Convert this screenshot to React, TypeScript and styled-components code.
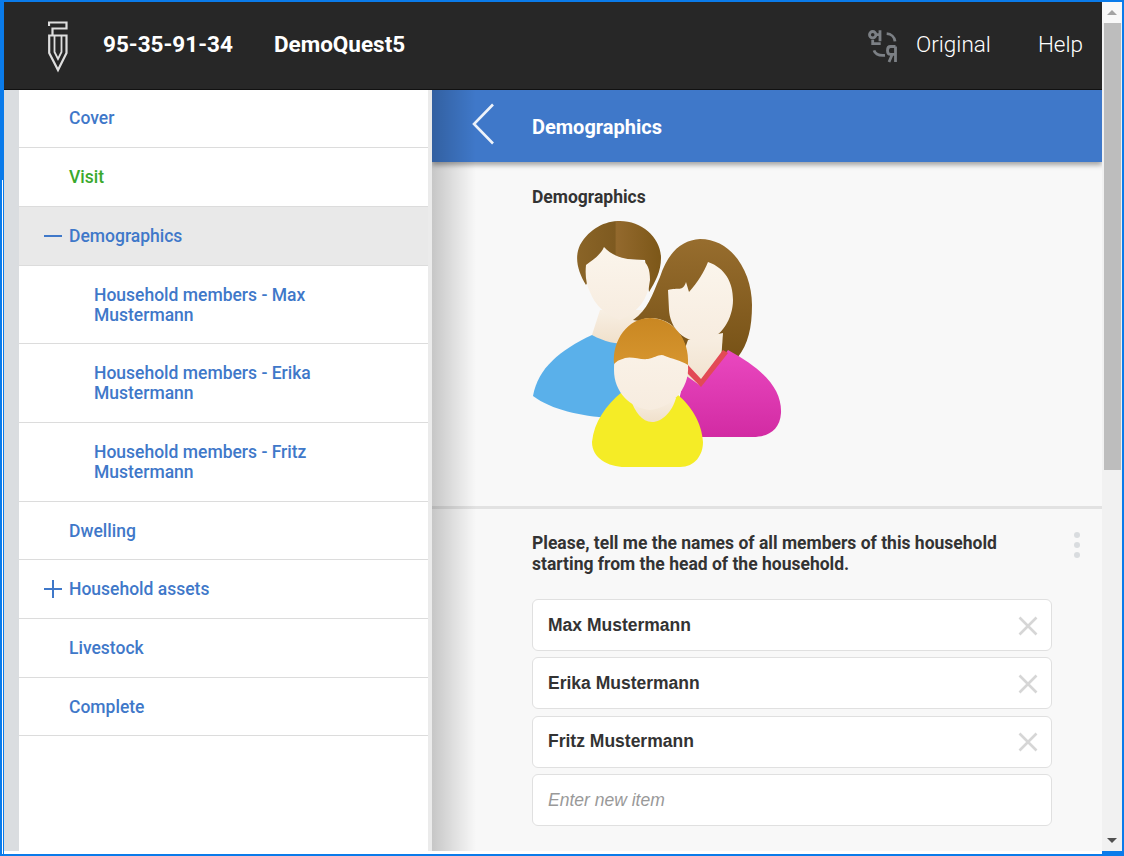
import React from "react";
import styled, { createGlobalStyle } from "styled-components";

const BLUE = "#3f78c9";

const GlobalStyle = createGlobalStyle`
  html, body {
    margin: 0;
    padding: 0;
    height: 100%;
    overflow: hidden;
    background: #fff;
    font-family: Roboto, "Liberation Sans", sans-serif;
  }
`;

const LogoIcon = () => (
  <svg width="20" height="52" viewBox="0 0 20 52" fill="none" stroke="#dedede" strokeWidth="2.2">
    <path d="M1 5V1.5H18.5V7.5H4.5V14" />
    <path d="M1.2 14.5H18.5V32L10 49L1.2 32Z" />
    <path d="M6.5 15V31L10 38L13.5 31V15" strokeWidth="1.8" />
  </svg>
);

const TranslateIcon = () => (
  <svg width="32" height="34" viewBox="0 0 32 34" fill="none" stroke="#7c8085" strokeWidth="2.8">
    <circle cx="4.7" cy="5.7" r="3.2" />
    <path d="M12 1.3V12.3M8 5.7H12" />
    <path d="M4.7 10.7V14.7H12.7" />
    <path d="M18.7 4.7C23 5 26.5 8 27 12.3" />
    <path d="M6 21.3C7 24.5 11 26.8 17 26.3" />
    <path d="M27.5 17.5V33M27.5 17.5H22.5C18.5 17.5 18.5 25.3 22.5 25.3H27.5M24.3 25.3L21 33" />
  </svg>
);

const Family = () => (
  <svg width="280" height="270" viewBox="0 0 280 270">
    <defs>
      <linearGradient id="hairA" x1="0" x2="1" y1="0" y2="0">
        <stop offset="0" stopColor="#8a6427" />
        <stop offset="0.45" stopColor="#7e5a20" />
        <stop offset="0.47" stopColor="#93692d" />
        <stop offset="1" stopColor="#7c5718" />
      </linearGradient>
      <linearGradient id="hairB" x1="0" x2="0" y1="0" y2="1">
        <stop offset="0" stopColor="#976d2e" />
        <stop offset="1" stopColor="#775216" />
      </linearGradient>
      <linearGradient id="face" x1="0" x2="0" y1="0" y2="1">
        <stop offset="0" stopColor="#fbf5ec" />
        <stop offset="1" stopColor="#f7ecdf" />
      </linearGradient>
      <linearGradient id="neck" x1="0" x2="0" y1="0" y2="1">
        <stop offset="0" stopColor="#f8efe3" />
        <stop offset="1" stopColor="#f0e0cb" />
      </linearGradient>
      <linearGradient id="pink" x1="0" x2="0" y1="0" y2="1">
        <stop offset="0" stopColor="#ea48c0" />
        <stop offset="1" stopColor="#d22ba3" />
      </linearGradient>
      <linearGradient id="orange" x1="0" x2="0" y1="0" y2="1">
        <stop offset="0" stopColor="#c98722" />
        <stop offset="1" stopColor="#d6952e" />
      </linearGradient>
    </defs>
    {/* father */}
    <path d="M72 125C40 140 18 158 13 186C32 200 60 206 90 208L130 130Z" fill="#5ab0ea" />
    <path d="M80 100L72 125C85 132 95 134 110 134L130 100Z" fill="url(#neck)" />
    <path d="M66 75C58 62 54 48 60 35C70 18 85 11 100 11C122 11 141 28 141 48C141 62 135 72 129 82L125 50L80 48Z" fill="url(#hairA)" />
    <path d="M66 55C72 50 80 46 84 37C92 46 105 50 120 50C128 52 130 60 130 70C128 90 118 102 100 110C85 105 75 95 70 82C66 74 65 65 66 55Z" fill="url(#face)" />
    {/* mother */}
    <path d="M113 110C128 100 132 85 140 67C148 42 162 30 180 29C212 29 232 62 232 95C232 118 228 134 218 147L170 150L125 112Z" fill="url(#hairB)" />
    <path d="M168 130L150 180L200 165L203 123Z" fill="url(#neck)" />
    <path d="M208 140C245 160 262 180 261 203C260 220 248 227 233 227H150L165 165L181 176Z" fill="url(#pink)" />
    <path d="M168 155L181 169L203 140L208 143L181 177L164 160Z" fill="#e24a55" />
    <path d="M148 80C158 77 163 82 166 72L169 82C178 72 184 62 188 52C205 58 213 72 213 90C213 108 202 128 183 132C160 132 150 115 149 100Z" fill="url(#face)" />
    {/* child */}
    <path d="M102 182C86 195 74 212 72 232C72 248 88 257 105 257H160C175 257 183 245 183 232C182 212 170 195 158 185L130 200Z" fill="#f5ec26" />
    <path d="M110 188C115 202 122 212 132 212C142 212 152 202 156 188Z" fill="url(#neck)" />
    <path d="M94 160C94 135 110 108 130 108C155 108 168 130 168 155C170 180 150 198 130 200C110 198 94 182 94 160Z" fill="url(#face)" />
    <path d="M94 154C92 130 108 108 130 108C152 108 170 128 168 155C160 150 152 149 145 146C140 143 135 148 128 149C120 150 112 146 105 148C100 150 98 150 94 154Z" fill="url(#orange)" />
  </svg>
);

const Frame = styled.div`
  box-sizing: border-box;
  width: 1124px;
  height: 856px;
  position: relative;
  display: flex;
  overflow: hidden;
  background: #0a7bea;
  padding: 2px 2px 2px 0;

  /* the window edge breaks into a thin white line below the title area */
  &::before {
    content: "";
    position: absolute;
    left: 2px;
    top: 180px;
    bottom: 2px;
    width: 1px;
    background: #fff;
  }
`;

const Viewport = styled.div`
  flex: 1;
  min-width: 0;
  display: flex;
  flex-direction: column;
  margin-left: 4px;
  background: #fff;
  padding-bottom: 3px;
`;

const Scrollbar = styled.div`
  width: 20px;
  flex: none;
  background: #f1f1f1;
  display: flex;
  flex-direction: column;
  align-items: center;
  margin-bottom: 3px;
`;

const ScrollArrow = styled.div<{ $up?: boolean }>`
  height: 21px;
  width: 100%;
  flex: none;
  display: flex;
  align-items: center;
  justify-content: center;
  background: ${({ $up }) => ($up ? "#f8f8f8" : "transparent")};

  &::before {
    content: "";
    border-left: 5px solid transparent;
    border-right: 5px solid transparent;
    ${({ $up }) =>
      $up ? "border-bottom: 5px solid #a3a3a3;" : "border-top: 5px solid #505050;"}
  }
`;

const ScrollThumb = styled.div`
  width: 17px;
  height: 447px;
  flex: none;
  background: #bdbdbd;
`;

const ScrollTrack = styled.div`
  flex: 1;
`;

const Header = styled.header`
  box-sizing: border-box;
  height: 88px;
  flex: none;
  display: flex;
  align-items: center;
  background: #272727;
  border-bottom: 1px solid #111;
  color: #fff;
  padding-left: 44px;
  padding-right: 19px;
`;

const Logo = styled.div`
  width: 20px;
  height: 52px;
  margin: 3px 35px 0 0;
`;

const HeadTitle = styled.div`
  font-size: 22.5px;
  font-weight: 700;
  margin: 0 41px 3px 0;
`;

const Spacer = styled.div`
  flex: 1;
`;

const LangIcon = styled.div`
  width: 32px;
  height: 34px;
  margin-right: 16px;
`;

const HeadLink = styled.div<{ $gap?: number }>`
  font-size: 22.5px;
  font-weight: 300;
  margin: 0 ${({ $gap }) => $gap ?? 0}px 3px 0;
`;

const Columns = styled.div`
  flex: 1;
  min-height: 0;
  display: flex;
`;

const Sidebar = styled.nav`
  box-sizing: border-box;
  width: 428px;
  flex: none;
  background: #fff;
  border-left: 15px solid #dadde0;
  border-right: 4px solid #ebebeb;
`;

const NavRow = styled.div<{ $active?: boolean; $sub?: boolean; $green?: boolean }>`
  box-sizing: border-box;
  display: flex;
  align-items: center;
  min-height: ${({ $sub }) => ($sub ? 78.7 : 58.7)}px;
  padding-left: ${({ $sub }) => ($sub ? 75 : 50)}px;
  padding-right: 60px;
  position: relative;
  border-bottom: 1px solid #dcdcdc;
  background: ${({ $active }) => ($active ? "#e9e9e9" : "#fff")};
  color: ${({ $green }) => ($green ? "#3aa92c" : BLUE)};
  font-size: 17.5px;
  font-weight: 500;
  line-height: 20px;

  &:first-child {
    min-height: 58.3px;
    padding-bottom: 2px;
  }
`;

const NavSign = styled.span`
  position: absolute;
  left: 25px;
  top: 50%;
  margin-top: -12px;
  height: 24px;
  width: 18px;
  display: flex;
  align-items: center;
  justify-content: center;

  svg {
    display: block;
  }
`;

const Main = styled.main`
  flex: 1;
  min-width: 0;
  display: flex;
  flex-direction: column;
  background: #f8f8f8;
  position: relative;
  overflow: hidden;

  &::before {
    content: "";
    position: absolute;
    left: 0;
    top: 0;
    bottom: 0;
    width: 44px;
    z-index: 2;
    pointer-events: none;
    background: linear-gradient(to right, rgba(0, 0, 0, 0.2), rgba(0, 0, 0, 0));
  }
`;

const TitleBar = styled.div`
  box-sizing: border-box;
  height: 72px;
  flex: none;
  display: flex;
  align-items: center;
  background: ${BLUE};
  color: #fff;
  font-size: 20px;
  font-weight: 700;
  position: relative;
  z-index: 1;
  box-shadow: 0 3px 5px rgba(0, 0, 0, 0.35);
  padding: 2px 0 0 40px;
`;

const BackIcon = styled.div`
  width: 22px;
  height: 42px;
  margin: -7px 38px 0 0;
`;

const Section = styled.section`
  position: relative;
  padding: 25px 50px 0 100px;
  height: 347px;
  box-sizing: border-box;
  border-bottom: 3px solid #e2e2e2;
  flex: none;
`;

const SectionTitle = styled.div`
  font-size: 17.5px;
  font-weight: 700;
  color: #333;
  line-height: 20px;
`;

const FamilyArt = styled.div`
  margin: 3px 0 0 -12px;
  width: 280px;
  height: 270px;
`;

const Question = styled.section`
  position: relative;
  padding: 24px 50px 0 100px;
`;

const QuestionText = styled.div`
  font-size: 17.5px;
  font-weight: 700;
  color: #333;
  line-height: 21px;
  width: 480px;
  margin-bottom: 24px;
`;

const Dots = styled.div`
  position: absolute;
  right: 22px;
  top: 23px;
  display: flex;
  flex-direction: column;
  gap: 4px;

  span {
    width: 6px;
    height: 6px;
    border-radius: 50%;
    background: #d9dcdf;
  }
`;

const Items = styled.div`
  display: flex;
  flex-direction: column;
  gap: 6.4px;
`;

const Item = styled.div`
  box-sizing: border-box;
  height: 52px;
  display: flex;
  align-items: center;
  justify-content: space-between;
  background: #fff;
  border: 1px solid #e0e0e0;
  border-radius: 6px;
  padding: 0 13px 0 15px;
  font-family: "Liberation Sans", Arial, sans-serif;
  font-size: 17.5px;
  font-weight: 700;
  color: #333;

  svg {
    margin-top: 1px;
  }
`;

const Placeholder = styled(Item)`
  font-weight: 400;
  font-style: italic;
  color: #999;
`;

const CloseIcon = () => (
  <svg width="20" height="20" viewBox="0 0 20 20" stroke="#d6d6d6" strokeWidth="2.6">
    <path d="M1.5 1.5L18.5 18.5M18.5 1.5L1.5 18.5" />
  </svg>
);

const navItems = [
  { label: "Cover" },
  { label: "Visit", green: true },
  { label: "Demographics", active: true, sign: "minus" },
  { label: "Household members - Max Mustermann", sub: true },
  { label: "Household members - Erika Mustermann", sub: true },
  { label: "Household members - Fritz Mustermann", sub: true },
  { label: "Dwelling" },
  { label: "Household assets", sign: "plus" },
  { label: "Livestock" },
  { label: "Complete" },
];

const members = ["Max Mustermann", "Erika Mustermann", "Fritz Mustermann"];

export default function App() {
  return (
    <Frame>
      <GlobalStyle />
      <Viewport>
        <Header>
          <Logo>
            <LogoIcon />
          </Logo>
          <HeadTitle>95-35-91-34</HeadTitle>
          <HeadTitle>DemoQuest5</HeadTitle>
          <Spacer />
          <LangIcon>
            <TranslateIcon />
          </LangIcon>
          <HeadLink $gap={47}>Original</HeadLink>
          <HeadLink>Help</HeadLink>
        </Header>
        <Columns>
          <Sidebar>
            {navItems.map((item) => (
              <NavRow key={item.label} $active={item.active} $sub={item.sub} $green={item.green}>
                {item.sign && (
                  <NavSign>
                    <svg width="18" height="18" viewBox="0 0 18 18" stroke={BLUE} strokeWidth="2">
                      <path d="M0 9H18" />
                      {item.sign === "plus" && <path d="M9 0V18" />}
                    </svg>
                  </NavSign>
                )}
                <span>{item.label}</span>
              </NavRow>
            ))}
          </Sidebar>
          <Main>
            <TitleBar>
              <BackIcon>
                <svg width="22" height="42" viewBox="0 0 22 42" fill="none" stroke="#eef3fa" strokeWidth="2.6">
                  <path d="M21 1.5L2 21L21 40.5" />
                </svg>
              </BackIcon>
              Demographics
            </TitleBar>
            <Section>
              <SectionTitle>Demographics</SectionTitle>
              <FamilyArt>
                <Family />
              </FamilyArt>
            </Section>
            <Question>
              <QuestionText>
                Please, tell me the names of all members of this household starting from the head
                of the household.
              </QuestionText>
              <Dots>
                <span />
                <span />
                <span />
              </Dots>
              <Items>
                {members.map((name) => (
                  <Item key={name}>
                    {name}
                    <CloseIcon />
                  </Item>
                ))}
                <Placeholder>Enter new item</Placeholder>
              </Items>
            </Question>
          </Main>
        </Columns>
      </Viewport>
      <Scrollbar>
        <ScrollArrow $up />
        <ScrollThumb />
        <ScrollTrack />
        <ScrollArrow />
      </Scrollbar>
    </Frame>
  );
}
